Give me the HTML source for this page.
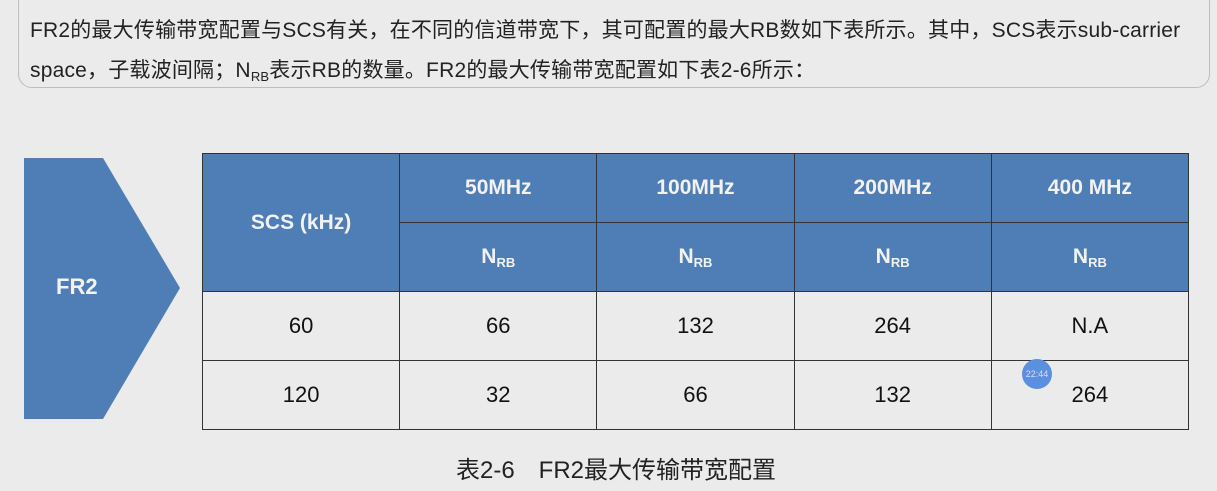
<!DOCTYPE html>
<html><head><meta charset="utf-8"><style>
body{margin:0;width:1217px;height:491px;background:#ebebeb;position:relative;overflow:hidden;font-family:"Liberation Sans","Noto Sans CJK SC",sans-serif;}
.box{position:absolute;left:18px;top:-12px;width:1192px;height:100px;border:1.5px solid #bdbdbd;border-radius:14px;box-sizing:border-box;}
.t{position:absolute;left:30px;font-size:21px;color:#222;white-space:nowrap;letter-spacing:0.2px;}
sub{font-size:13px;vertical-align:-4px;}
table{position:absolute;left:202px;top:153px;border-collapse:collapse;table-layout:fixed;width:987px;}
td{border:1.5px solid #333;text-align:center;font-size:22px;color:#111;padding:0;}
th{border:1.5px solid #333;background:#4f7eb7;color:#f2f2f2;font-size:21px;font-weight:bold;padding:0;}
</style></head><body>
<div class="box"></div>
<div class="t" style="top:14px">FR2的最大传输带宽配置与SCS有关，在不同的信道带宽下，其可配置的最大RB数如下表所示。其中，SCS表示sub-carrier</div>
<div class="t" style="top:54px">space，子载波间隔；N<sub>RB</sub>表示RB的数量。FR2的最大传输带宽配置如下表2-6所示：</div>
<svg style="position:absolute;left:0;top:0" width="200" height="440"><polygon points="24,158 103,158 180,288 103,419 24,419" fill="#4f7eb7"/><text x="56" y="294" font-family="Liberation Sans" font-weight="bold" font-size="22" fill="#f2f2f2">FR2</text></svg>
<table>
<tr style="height:69px"><th rowspan="2">SCS (kHz)</th><th>50MHz</th><th>100MHz</th><th>200MHz</th><th>400 MHz</th></tr>
<tr style="height:69px"><th>N<sub>RB</sub></th><th>N<sub>RB</sub></th><th>N<sub>RB</sub></th><th>N<sub>RB</sub></th></tr>
<tr style="height:69px"><td>60</td><td>66</td><td>132</td><td>264</td><td>N.A</td></tr>
<tr style="height:69px"><td>120</td><td>32</td><td>66</td><td>132</td><td>264</td></tr>
</table>
<div style="position:absolute;left:1022px;top:359px;width:30px;height:30px;border-radius:50%;background:#5b8fe0;color:#dde;font-size:9px;line-height:30px;text-align:center">22:44</div>
<div style="position:absolute;left:456px;top:450px;font-size:24px;color:#222">表2-6　FR2最大传输带宽配置</div>
</body></html>
